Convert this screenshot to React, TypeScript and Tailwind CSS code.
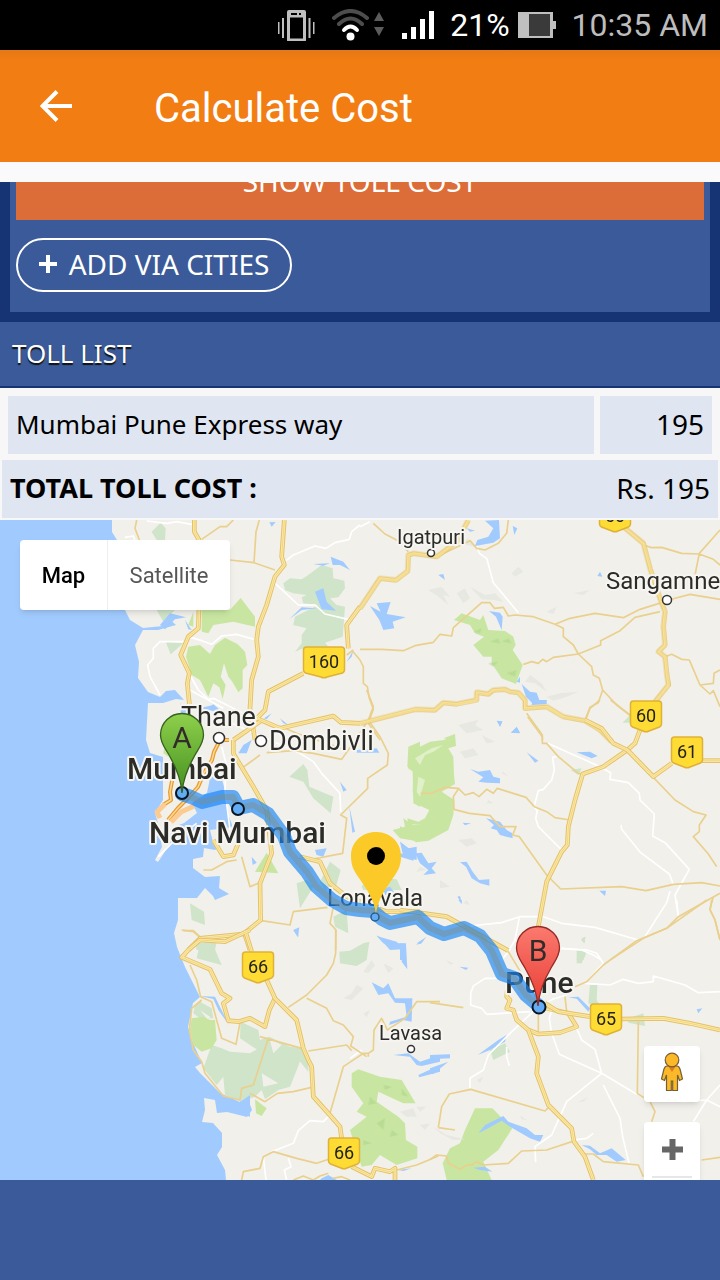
import type { ReactNode } from "react";

const tolls = [{ name: "Mumbai Pune Express way", cost: 195 }];

/* Map sheets are drawn at three times the display size. */
function Sheet({ x, y, children }: { x: number; y: number; children: ReactNode }) {
  return <g transform={`translate(${x} ${y}) scale(0.33333)`}>{children}</g>;
}

function Highway({ d }: { d: string }) {
  return (
    <>
      <path d={d} fill="none" stroke="#e5c167" strokeWidth="14" strokeLinejoin="round" />
      <path d={d} fill="none" stroke="#fbeaa6" strokeWidth="8" strokeLinejoin="round" />
      <path d={d} fill="none" stroke="#ebcc78" strokeWidth="2" strokeLinejoin="round" />
    </>
  );
}

function Road({ d }: { d: string }) {
  return <path d={d} fill="none" stroke="#ead08d" strokeWidth="5" strokeLinejoin="round" />;
}

function Lane({ d }: { d: string }) {
  return <path d={d} fill="none" stroke="#ffffff" strokeWidth="5" strokeLinejoin="round" />;
}

function Shield({ x, y, w = 31, label }: { x: number; y: number; w?: number; label: string }) {
  const h = w / 2;
  return (
    <g transform={`translate(${x} ${y})`}>
      <path
        d={`M${-h + 3} -15H${h - 3}Q${h} -15 ${h} -12V8Q${h} 10 ${h - 2} 11L3 15Q0 16.500 -3 15L${-h + 2} 11Q${-h} 10 ${-h} 8V-12Q${-h} -15 ${-h + 3} -15Z`}
        fill="#fedc34"
        stroke="#dfb136"
        strokeWidth="1.500"
      />
      <text y="6" textAnchor="middle" fontSize="18" fill="#222">
        {label}
      </text>
    </g>
  );
}

function Place({ x, y, size, bold, children }: { x: number; y: number; size: number; bold?: boolean; children: string }) {
  return (
    <text
      x={x}
      y={y}
      fontSize={size}
      fontWeight={bold ? 500 : 400}
      fill="#2b2b28"
      stroke="#f6f5f1"
      strokeWidth="4"
      strokeLinejoin="round"
      paintOrder="stroke"
    >
      {children}
    </text>
  );
}

function Pin({ x, y, label, from, to, edge }: { x: number; y: number; label: string; from: string; to: string; edge: string }) {
  return (
    <g transform={`translate(${x} ${y})`}>
      <defs>
        <linearGradient id={`pin-${label}`} x1="0" y1="0" x2="0" y2="1">
          <stop offset="0" stopColor={from} />
          <stop offset="1" stopColor={to} />
        </linearGradient>
      </defs>
      <path
        d="M0 0C-1 -14 -6 -26 -13 -38C-17 -45 -21.500 -50 -21.500 -58A21.500 21.500 0 0 1 21.500 -58C21.500 -50 17 -45 13 -38C6 -26 1 -14 0 0Z"
        fill={`url(#pin-${label})`}
        stroke={edge}
        strokeWidth="1.300"
      />
      <text y="-45" textAnchor="middle" fontSize="30" fill="#332b2a">
        {label}
      </text>
    </g>
  );
}

const route = "M182 794L191 797L202 802L222 797L233 797L239 808L253 805L268 814L284 836L290 852L307 872L316 886L332 900L346 908L360 910L373 911L382 919L390 923L418 917L430 928L444 934L464 928L480 936L492 951L502 974L514 978L526 995L539 1006";

function TollMap() {
  return (
    <svg
      className="block h-full w-full bg-[#a1cbfe] font-[Roboto,sans-serif]"
      viewBox="0 520 720 660"
      preserveAspectRatio="xMidYMid slice"
      role="img"
      aria-label="Route from Mumbai to Pune"
    >
      <path
        fill="#f1f0eb"
        d="M112 520V532L117 540L122 565V590L125 610L130 620L143 628L163 626L168 618L176 625L158 630L143 630L135 645L139 662L138 678L148 692L160 697L166 691L175 690L184 700L176 699L163 703L148 703L146 740L150 753L163 757V800L155 813L158 823L162 847L155 860L158 862L168 847L172 828L184 823L197 813L192 803L207 793L210 778L220 773L225 790L229 817L233 827L210 830L213 842L220 846L215 850L204 848L203 857L193 859V868L205 877L220 876L219 888L229 894L215 900L213 896L205 888L197 898L178 898V920L174 933L177 947L185 967L200 997L193 1003L188 1027L193 1043L202 1063L195 1067L200 1073L220 1093L240 1102L245 1090L257 1082L247 1096L252 1110L247 1117L227 1112L217 1113L215 1100L204 1098L205 1110L202 1122L213 1123L222 1133V1147L217 1155L225 1170L226 1180H720V520Z"
      />

      {/* Parks */}
      <Sheet x={0} y={510}>
        <path fill="#cfe4c9" d="M455 65L482 38L497 55L495 90H470ZM850 220L870 205L905 208L925 195L965 165L998 175L1000 205L1033 212L1035 235L1015 262L990 265L1010 285L1035 290L1028 380L975 398L985 410H920L885 425L905 400V375L920 355L880 345L885 320L925 300L955 285L910 280L905 262L920 255L880 250L855 240ZM470 300H525L490 335ZM497 395L550 400L512 433Z" />
        <path fill="#c8e6a1" d="M605 300H690L722 264L765 320V350L700 335L640 345L625 370L605 365ZM565 345L580 305V350ZM565 410L600 405L630 432L645 405L675 383L712 402L735 425L742 465L728 480V535L715 547L697 515L685 500L672 460L662 500L677 525L668 567L658 532L640 520L625 560L600 510L575 495L558 440Z" />
      </Sheet>
      <Sheet x={360} y={510}>
        <path fill="#c8e6a1" d="M282 330L305 310L360 330L370 315L385 360L435 363L460 380L467 405L458 420L488 465L468 522L425 505L395 460L395 440L370 440L340 405L372 380L345 370L330 345ZM250 685L285 672L285 690Z" />
      </Sheet>
      <Sheet x={100} y={690}>
        <path fill="#cfe4c9" d="M568 260L610 222L622 240L628 290L700 320L692 370L640 325L610 275ZM660 575L690 515L722 540L705 600H675ZM590 580L620 570L640 590L600 655ZM270 640L312 665L315 705L275 690ZM700 680L740 660L745 730L705 710ZM285 760L350 755L345 780H290ZM785 590L800 560L890 568L905 600H790Z" />
        <path fill="#c8e6a1" d="M500 488L535 550L465 545ZM200 130L220 160L205 200L190 190ZM878 420L915 410L910 385L940 405H960V455L900 445ZM925 170L960 155V350L940 340L938 240L922 230Z" />
      </Sheet>
      <Sheet x={400} y={700}>
        <path fill="#c8e6a1" d="M24 155L60 140L90 125L132 120L165 102L168 138L145 145L160 170L162 225L165 252L125 275L163 300L160 345L145 390L85 422L48 427L0 395V378L30 400L62 375L25 372L22 355L55 365L75 355L88 330L55 315L45 300L38 275L40 215L24 205Z" />
        <path fill="#e0f0c8" d="M45 175L95 145L130 135L100 155L75 165L60 195ZM55 230L75 240L60 290L50 275Z" />
        <path fill="#cfe4c9" d="M668 68L690 45V68ZM512 210L545 205L535 225ZM543 720L555 710V730ZM530 780L540 750L560 755L550 780Z" />
      </Sheet>
      <Sheet x={150} y={930}>
        <path fill="#cfe4c9" d="M140 85L150 40L185 35L215 105ZM272 275L325 300L330 330L358 320L420 350L460 355L475 390L475 425L450 395L420 470L385 480L345 508L335 480L315 500L275 515L225 495L220 440L200 465L160 415L185 345L215 355L240 365L300 370L320 358L270 325ZM568 65L600 62L640 40L658 35L650 90L620 108L570 100Z" />
        <path fill="#cfe4c9" d="M135 225L150 215L185 235L190 265H150L130 250Z" />
        <path fill="#f1f0eb" d="M358 325L395 345L370 370ZM335 430L385 460L340 470ZM450 395L475 430L435 440ZM265 330L320 360L250 365ZM150 240L182 262L172 268Z" />
        <path fill="#c8e6a1" d="M125 265L160 260L180 270H195L200 330L185 355L155 365L130 345L120 300ZM315 508L350 535L335 558L318 550ZM605 430L625 418L690 440L755 450L797 520L760 520L685 485L680 515L745 560L765 580L768 630L802 650V685L740 705L690 675L665 705L635 710L625 680L600 600L650 560L620 545L640 520L605 470Z" />
      </Sheet>
      <Sheet x={430} y={900}>
        <path fill="#c8e6a1" d="M135 625H187L247 685L205 750L160 785L185 840H50L38 790L60 745L90 730L105 690Z" />
        <path fill="#cfe4c9" d="M440 150L470 155L455 190H440ZM455 115L468 110L460 130ZM480 255H502L500 300L515 325L475 310ZM595 355L640 340L645 378L595 368ZM180 450L225 430L240 455L190 480Z" />
      </Sheet>

      {/* Water */}
      <g fill="#a1cbfe">
        <Sheet x={0} y={510}>
          <path d="M480 345L510 310L558 322L525 328L495 358ZM540 580L565 600L568 690H550ZM945 245L970 235L980 275L1008 302L965 298ZM992 140L1030 155L1050 180L1020 165H998ZM868 328L905 292L950 295L905 300ZM940 162L990 160L970 167ZM808 37L827 36L815 50ZM555 330L575 360L565 358ZM1040 455L1060 420L1055 440ZM620 598L640 583L660 600Z" />
        </Sheet>
        <Sheet x={360} y={510}>
          <path d="M375 32L417 30L420 85L400 98L345 108L352 90L385 80L400 55ZM458 48L472 55L463 75ZM320 55L345 62L330 65ZM50 280L92 276L80 312L137 322L98 335L103 355L70 360L58 330L30 288L62 305ZM235 195L250 192L255 210ZM387 303L420 308L428 320L425 360L408 320ZM485 522L510 545L530 548L538 570H560L555 580L520 583L498 560ZM470 515L480 500V518ZM410 632L427 634L420 650ZM453 668L470 650L480 668ZM712 198L720 185L727 200Z" />
        </Sheet>
        <Sheet x={100} y={690}>
          <path d="M298 55L340 45L390 95L350 65ZM492 85L515 70L500 88ZM540 85L565 105L550 100ZM645 480L680 475L670 500L650 495ZM720 275L740 300L730 305ZM748 350L765 425L757 428ZM455 500L470 518L458 525ZM580 720L598 712L593 742ZM830 738L890 755L910 780L850 760ZM840 600L870 590L885 610L855 615ZM900 455L925 475L950 470V510L910 500ZM770 180L830 175L838 188H770ZM430 165L455 150L440 190H415Z" />
        </Sheet>
        <Sheet x={400} y={700}>
          <path d="M292 63L307 65L300 80ZM333 98L350 82L360 100ZM380 157L415 182L405 188ZM530 157L570 155L593 168L575 175ZM210 207L235 215L270 210L280 230L300 235V250L260 248L235 245L250 232ZM258 355L300 365L320 390L337 400L338 415L300 405L290 390L272 385L282 375ZM188 368L213 370L195 376ZM0 425L45 460L40 482L0 470V460L25 465ZM45 460L65 458L85 490L110 485L95 505L108 520L70 525L85 510L60 490ZM180 487L200 485L218 515L237 540L268 538V557L240 550L215 535L198 500ZM172 590L180 588L187 612ZM598 572L618 572L615 588ZM48 735L75 715L65 730ZM0 730H18V780H0ZM398 0H440V12L395 15Z" />
        </Sheet>
        <Sheet x={150} y={930}>
          <path d="M150 198L195 200L212 235L237 285L205 240L190 207ZM265 520L300 495V560L270 550ZM680 15L710 35L768 42L772 118L755 95L758 58L720 60ZM800 40L830 20L810 42ZM665 157L700 175L715 160L735 205L787 205L785 275L760 270L718 285L720 275L770 260L765 220L735 218L715 190L685 195ZM730 375L775 370L810 395L870 375V395L815 408L800 405L780 380ZM805 435L870 405V425L808 442ZM430 0H445V20ZM745 720L785 715L760 723ZM515 745L535 735L560 750H510Z" />
        </Sheet>
        <Sheet x={430} y={900}>
          <path d="M143 465L205 420L230 405L225 425L180 450ZM0 465L60 463V475L0 478ZM0 505L55 485L10 522H0ZM145 700L165 675L220 648L235 665L290 685L315 705H340L330 725L300 715L240 680L215 662L165 690ZM455 735L480 737L510 760L545 745L587 780L560 785L530 765L500 765L480 748ZM88 200L115 203L108 210ZM415 292L445 290L480 325L475 335L440 296ZM800 328L817 325L805 340ZM130 803L165 800L187 815L150 810ZM85 0H95V12Z" />
        </Sheet>
      </g>

      {/* Hill shading */}
      <g fill="#e8e8e2">
        <Sheet x={360} y={510}>
          <path d="M205 240L245 230L270 260L250 255L265 285L235 260ZM290 250L315 235L330 265L310 280ZM330 230L375 255L405 250L430 275L400 270L365 268ZM455 190L475 170L490 185L465 200ZM510 495L545 520L560 545L525 520L495 515ZM560 560L600 550L655 545L620 560L580 572ZM215 60L250 65L235 80ZM300 100L325 85L340 110ZM560 305L590 290L580 312ZM640 250L690 240L670 255Z" />
        </Sheet>
        <Sheet x={400} y={700}>
          <path d="M175 75L235 60L225 75L250 90L200 100ZM245 105L285 125L260 130ZM180 155L220 145L235 165L195 175ZM310 215L325 230L305 220ZM175 420L215 415L230 430L200 440ZM60 500L80 510L50 515ZM120 540L150 560L120 565ZM265 300L280 310L260 310ZM200 600L210 615L190 610Z" />
        </Sheet>
        <Sheet x={150} y={930}>
          <path d="M580 205L605 190L620 165L640 175L605 210ZM640 125L665 90L675 105L655 130ZM750 545L790 535L800 560L770 560ZM700 100L730 115L715 130ZM640 250L660 240L650 262ZM800 530L830 530L810 545ZM810 585L840 580L825 600Z" />
        </Sheet>
        <Sheet x={430} y={900}>
          <path d="M10 680L50 705L105 718L70 720L30 700ZM445 605L475 590L460 605ZM270 645L290 660L275 658ZM140 540L160 530L150 550ZM50 180L70 190L60 195Z" />
        </Sheet>
      </g>
      <g fill="#afd58d" opacity="0.6">
        <Sheet x={360} y={510}>
          <path d="M390 395L415 385L420 400ZM425 395L445 385L455 400ZM340 365L365 355L360 370ZM440 490L470 480L465 500ZM385 460L415 455L400 470Z" />
        </Sheet>
        <Sheet x={150} y={930}>
          <path d="M680 580L705 565L700 600ZM725 600L745 615L720 620ZM660 500L680 520L655 525ZM700 465L725 470L705 480ZM640 630L665 640L640 645ZM755 475L775 500L755 495Z" />
        </Sheet>
      </g>

      {/* White lanes */}
      <Sheet x={0} y={510}>
        <Lane d="M440 33L500 40L530 35L585 45M375 82L400 78L405 92M858 152L880 135L945 108L978 115L1005 98L1048 88L1055 65L1080 45M820 215L895 285L945 285L975 312L1045 328M770 390L710 373L665 378L635 403L605 392L565 380M560 395H480L460 415V445L443 465L450 500L480 555M568 492L595 540L625 568L640 565L740 615" />
      </Sheet>
      <Sheet x={360} y={510}>
        <Lane d="M350 108L358 130L380 145L400 218L475 308M0 50L30 35" />
      </Sheet>
      <Sheet x={100} y={690}>
        <Lane d="M395 100L600 190L640 215L665 250L720 310L722 365M260 -5L370 55M365 170L378 220L375 300L390 420M175 500L235 440L290 400" />
      </Sheet>
      <Sheet x={400} y={700}>
        <Lane d="M443 130L600 200L632 218L630 238L685 248L718 280L720 300L763 342L758 408L795 428L868 508L825 585L835 648M470 170L458 172L463 210L455 240L430 268L415 272L402 320L412 332L407 355L415 380L485 450M663 375L665 388L722 458L808 522L820 553M810 573L800 608L735 710M210 678L305 668L360 650L430 650L485 670L585 682L715 720M358 652L345 720L325 755L305 780M480 745L545 750L580 765L605 780" />
      </Sheet>
      <Sheet x={430} y={900}>
        <Lane d="M395 145L470 150L500 160L520 190L465 250L540 255L580 238L625 250L670 245V228L765 255L805 278L870 275M325 320L240 400L175 465L160 510L120 535V565M230 440V470L238 497M200 235L165 235L130 258L122 280V315L155 325L170 343L300 335M365 330L358 355L365 400L388 463L515 520L620 583M440 385L455 420L495 448L515 520L410 605L365 705L315 740L317 787M520 555L570 655L578 710L597 790M790 665L830 600L870 555M755 605L830 600L870 620M430 720L470 715L490 700M740 0L745 48M325 320L370 297L410 285" />
      </Sheet>
      <Sheet x={150} y={930}>
        <Lane d="M540 555L520 575L480 572L445 602L430 640L365 665M340 680L348 750M600 385L635 360M415 685L423 710L403 720L410 750" />
      </Sheet>

      {/* Secondary roads */}
      <Sheet x={0} y={510}>
        <Road d="M410 30L405 55L418 90M605 88L660 50H680L700 30M690 150L762 158L825 180M762 158L768 65L778 30M1055 420L1080 450M1060 420L1040 435" />
      </Sheet>
      <Sheet x={360} y={510}>
        <Road d="M40 40L75 72L110 90L145 125M230 140L330 92L350 115L375 120L415 100L440 70L445 30M0 418L65 418L130 422L165 407L220 397L240 373L275 378L280 353L365 278H390L403 295L430 292L445 318L465 315L520 320L585 343L610 355V380L640 405L655 432L695 470L700 495L718 505L728 540L770 585L815 620M728 540L715 578L690 592L675 630M585 343L630 325L705 310L790 323L840 298L905 278M900 305L825 322L780 362L722 392V405L655 432L580 442L560 455L548 448L535 460L515 455L490 463M850 105L875 113L905 112L965 130L1017 132L1060 148L1080 165M1080 60L1018 130L1005 195M925 270L990 253L1080 268M0 450L10 470V520L22 530L28 565L40 598L25 640L60 690M915 440L935 433L965 448L988 450L1000 478L1020 525L1060 520L1062 490L1080 480M1020 525L1050 552L1060 542L1080 590M500 610L547 675V690" />
      </Sheet>
      <Sheet x={100} y={690}>
        <Road d="M800 0L820 50L805 90L840 140L865 190L862 225L803 265V295L722 375L740 385L728 490L625 510M805 90L770 145L725 208L640 190L580 182L500 188M425 235L480 195M425 500L450 590L485 575M485 692L570 705L580 665L700 650M250 722H280L305 745M700 650L690 700L708 720L707 780M310 540H335L380 515L410 510M545 110L590 130L740 180" />
      </Sheet>
      <Sheet x={400} y={700}>
        <Road d="M383 50L427 110V130H440L475 170L535 220L550 222M62 280H95L135 262L175 265L195 285L220 278L237 290L260 268L280 280L292 265L378 292L403 320L440 335L465 353L510 360M175 267L160 290L162 328L208 340L270 347L300 380L348 380L338 405L358 410L440 525L482 567L665 560L738 572L820 553L905 548L960 558M557 60L570 25L600 0M632 0L690 45M760 232L825 300L880 335L918 345L898 375V395L880 410L925 462L950 500M630 780L730 715L800 685L835 650L960 580M940 590L930 628L945 660L960 720" />
      </Sheet>
      <Sheet x={150} y={930}>
        <Road d="M557 0V70L550 100L530 135L470 195L415 232M470 205L530 235L550 272L580 285L610 320L602 348L650 380M475 363L590 345L605 362M95 0L130 5L150 22M120 105L140 150L152 200L185 215L215 325L258 343L270 278M155 210L125 235L118 300L130 360L155 395L165 430L220 498L270 510L275 475L310 465L355 325M330 320L455 355M300 490L345 515L382 490L430 485L485 472M540 550L580 410L640 370L655 370V380M655 370L670 360L672 300L695 265L712 300L765 265L800 215H870M275 750L280 725L330 715L340 680L370 665L440 685L500 700L545 685M548 745L575 740L600 750M740 720L800 705L865 678M430 750L460 738L490 750L510 738L535 730" />
      </Sheet>
      <Sheet x={430} y={900}>
        <Road d="M180 130L235 155L325 305V400M435 260L470 245L520 195L620 122L710 85L830 0M845 0L840 30L855 60L870 120M0 308L100 323M330 320L410 335L405 290M370 400L440 380M25 683L35 620L58 582L122 568L345 633L358 620M25 683L75 690M0 778L20 765L50 768L55 790L90 808L110 795H125L140 785L160 795L235 790L275 753L350 750L435 722M460 762H490L520 785L625 795L640 830M815 780L870 772M625 365L622 580L660 605L675 635L665 665" />
      </Sheet>

      {/* Highways */}
      <Sheet x={0} y={510}>
        <Highway d="M583 30V65L597 90V290L595 355L565 380L542 435L568 490L562 520L570 600" />
        <Highway d="M853 30L845 140L853 165L825 200L800 285L775 350L770 390L775 440L755 510L750 595L765 690" />
        <Highway d="M910 490L805 545L795 600L770 625L840 655L1000 618L1022 637L1080 640" />
        <Highway d="M1045 415L1040 345L1080 290" />
      </Sheet>
      <Sheet x={360} y={510}>
        <Highway d="M325 30L290 95L230 140L160 130L145 135L143 183L108 210L60 205L0 295" />
        <Highway d="M790 50L850 100L870 175L900 265L915 305L910 350L915 405L895 425L915 440L920 490L925 525L885 575" />
        <Highway d="M0 640L165 598L225 600L250 578L290 582L350 570V547L385 552L400 540L435 538L450 545L475 548L495 570V595L560 590L610 620L675 632L720 660L755 695" />
      </Sheet>
      <Sheet x={100} y={690}>
        <Highway d="M400 150V190L460 290L500 360L515 490L480 580L482 690L430 732L300 745L265 780" />
        <Highway d="M435 735L450 780" />
        <Highway d="M600 500L660 515L690 580L740 620L860 665H960" />
        <Highway d="M340 450L370 500L400 495L415 460" />
        <Highway d="M480 95L400 150" />
      </Sheet>
      <Sheet x={400} y={700}>
        <Highway d="M720 90L705 130L682 150L610 200L548 222L525 300L505 380L502 435L485 455L440 545L415 680" />
        <Highway d="M555 60L605 85L640 130L682 150L760 230L815 190" />
        <Highway d="M905 182H960" />
        <Highway d="M0 630L140 650L325 752" />
      </Sheet>
      <Sheet x={150} y={930}>
        <Highway d="M115 60L150 30L225 35L300 0M115 60L95 82L180 118L215 190L240 205L220 220L235 272L265 275L300 265L345 290L358 240L375 205" />
        <Highway d="M288 10L305 65M350 150L375 205L440 270L460 355L475 390L485 410L490 500L535 550L570 590L575 625" />
        <Highway d="M605 710L665 740L675 715L720 725L735 715V750" />
      </Sheet>
      <Sheet x={430} y={900}>
        <Highway d="M232 270L230 290L240 300L230 325L250 330L260 360L295 390L325 402L390 398L440 380L415 340L350 325" />
        <Highway d="M295 390L325 470L320 520L355 615L425 685L432 725L465 770L490 840" />
        <Highway d="M345 310L385 335L480 350M575 357L700 355L780 370L870 390" />
      </Sheet>

      {/* City roads around Mumbai */}
      <g fill="none" stroke="#e89b2d" strokeLinejoin="round">
        <path strokeWidth="4" d="M229 740H220L214 752L212 760L204 773L198 787L188 798L178 808L168 820M174 770L170 792L171 800L163 805" />
        <path stroke="#fdda9b" strokeWidth="1.500" d="M229 740H220L214 752L212 760L204 773L198 787L188 798L178 808L168 820M174 770L170 792L171 800L163 805" />
        <path stroke="#fbcb92" strokeWidth="5" d="M165 804L157 812L160 818M171 822L181 812L194 806" />
      </g>

      {/* Place names */}
      <g fill="#fff" stroke="#333" strokeWidth="1.500">
        <circle cx="431" cy="553" r="3.500" />
        <circle cx="667" cy="600" r="4.500" />
        <circle cx="219" cy="738" r="5.500" />
        <circle cx="261" cy="741" r="5.500" />
        <circle cx="411" cy="1049" r="3.500" />
      </g>
      <Place x={397} y={544} size={20}>Igatpuri</Place>
      <Place x={606} y={589} size={24}>Sangamner</Place>
      <Place x={181} y={726} size={27}>Thane</Place>
      <Place x={269} y={750} size={27}>Dombivli</Place>
      <Place x={127} y={779} size={30} bold>Mumbai</Place>
      <Place x={149} y={843} size={30} bold>Navi Mumbai</Place>
      <Place x={327} y={906} size={24}>Lonavala</Place>
      <Place x={505} y={993} size={30} bold>Pune</Place>
      <Place x={379} y={1040} size={20}>Lavasa</Place>

      <Shield x={615} y={516} label="60" />
      <Shield x={324} y={662} w={41} label="160" />
      <Shield x={646} y={716} label="60" />
      <Shield x={687} y={752} label="61" />
      <Shield x={258} y={967} label="66" />
      <Shield x={606} y={1019} label="65" />
      <Shield x={344} y={1153} label="66" />

      {/* Route */}
      <path d={route} fill="none" stroke="#1482f5" strokeOpacity="0.65" strokeWidth="14" strokeLinejoin="round" strokeLinecap="round" />
      <path d={route} fill="none" stroke="#848a78" strokeOpacity="0.4" strokeWidth="6" strokeLinejoin="round" />
      <g fill="#62acf5" stroke="#071626" strokeWidth="2">
        <circle cx="182" cy="793" r="6" />
        <circle cx="238" cy="809" r="6" />
        <circle cx="539" cy="1007" r="6.500" />
        <circle cx="375" cy="917" r="4" stroke="#285c8c" strokeWidth="1.500" />
      </g>
      <path d="M376 914C374 898 365 887 359 878C354 871 351 866 351 856C351 842 362 832 376 832C390 832 401 842 401 856C401 866 398 871 393 878C387 887 378 898 376 914Z" fill="#fbca28" />
      <circle cx="376" cy="856" r="9" fill="#000" />
      <Pin x={182} y={793} label="A" from="#8fd04c" to="#43901f" edge="#35621f" />
      <Pin x={538} y={1006} label="B" from="#fb7a6e" to="#e93d35" edge="#962923" />
    </svg>
  );
}

function StatusBar() {
  return (
    <div className="flex h-[50px] items-center justify-end bg-black pr-3 font-[Roboto,sans-serif] text-[32px] leading-[50px] text-[#bdbdbd]">
      <svg className="mr-4 h-8 w-[38px]" viewBox="0 0 38 32" fill="#bfbfbf" aria-label="Vibrate">
        <path fillRule="evenodd" d="M11 1H26Q28 1 28 3V31Q28 33 26 33H11Q9 33 9 31V3Q9 1 11 1ZM12 8.500V29.500H25V8.500ZM13 4V6H19V4ZM21 4V6H23V4Z" />
        <path d="M0 13H1.500V25H0ZM4 9H6V29H4ZM30.500 9H32.500V29H30.500ZM35 13H36.500V25H35Z" />
      </svg>
      <svg className="mr-4 h-8 w-[54px]" viewBox="0 0 54 32" fill="none" strokeWidth="4" strokeLinecap="round" aria-label="Wi-Fi">
        <path stroke="#4d4d4d" d="M2 9Q18.500 -5 35 9M7 15Q18.500 4 30 15" />
        <path stroke="#fff" d="M12 21Q18.500 14 25 21" />
        <circle cx="18.500" cy="27.500" r="4" fill="#fff" />
        <path fill="#5c5c5c" d="M47 3L52 12H42ZM47 27L42 18H52Z" />
      </svg>
      <svg className="mr-4 h-7 w-8" viewBox="0 0 32 28" fill="#fff" aria-label="Signal">
        <path d="M0 22H5V28H0ZM9 16H14V28H9ZM18 8H23V28H18ZM27 0H32V28H27Z" />
      </svg>
      <span className="mr-2 text-white">21%</span>
      <svg className="mr-4 h-[26px] w-[38px]" viewBox="0 0 38 26" fill="#bfbfbf" aria-label="Battery">
        <path d="M0 0H35V9H38V17H35V26H0Z" />
        <path fill="#3a3a3a" d="M11 2H32V24H11Z" />
      </svg>
      <span>10:35 AM</span>
    </div>
  );
}

export default function App() {
  return (
    <div className="flex min-h-screen flex-col bg-[#3b5a99] font-['Noto_Sans',sans-serif] text-[26px] text-black">
      <StatusBar />
      <header className="flex h-28 items-center bg-linear-to-b from-[#e57916] to-[#f27d13] to-10% text-white">
        <button type="button" aria-label="Back" className="ml-10 flex h-12 w-8 items-center">
          <svg className="h-8 w-8" viewBox="0 0 32 32" fill="none" stroke="#fff" strokeWidth="4">
            <path d="M17 1.500L2.500 16L17 30.500M2.500 16H32" />
          </svg>
        </button>
        <h1 className="ml-[82px] pt-[6px] font-[Roboto,sans-serif] text-[40px] leading-[48px]">Calculate Cost</h1>
      </header>
      <main className="border-t-[20px] border-[#fafafa]">
        <section className="overflow-hidden border-x-[10px] border-b-[10px] border-[#163474] bg-[#3b5a99] px-[6px] pb-5 text-white">
          <button type="button" className="-mt-9 block h-[74px] w-full bg-[#dd6d38] pb-1 text-[28px]">
            SHOW TOLL COST
          </button>
          <button type="button" className="mt-[18px] flex h-[54px] w-[276px] items-center justify-center rounded-full border-2 border-white pb-[2px] text-[28px]">
            <svg className="mr-3 h-[18px] w-[18px]" viewBox="0 0 18 18" fill="none" stroke="#fff" strokeWidth="4" aria-hidden="true">
              <path d="M9 0V18M0 9H18" />
            </svg>
            ADD VIA CITIES
          </button>
        </section>
        <h2 className="h-[66px] border-b-2 border-[#163474] pl-3 leading-[62px] text-white [text-shadow:0_2px_1px_#111]">TOLL LIST</h2>
        <div className="bg-[#f7f7f7] p-[2px]">
          <table className="w-full border-separate border-spacing-[6px]">
            <tbody>
              {tolls.map((toll) => (
                <tr key={toll.name} className="h-[58px] bg-[#dfe6f1]">
                  <td className="px-2 pb-[2px]">{toll.name}</td>
                  <td className="w-28 px-2 pb-[2px] text-right text-[28px]">{toll.cost}</td>
                </tr>
              ))}
            </tbody>
          </table>
          <div className="flex h-[58px] items-center justify-between bg-[#dfe6f1] px-2 pb-[2px] text-[28px]">
            <strong className="text-[27px]">TOTAL TOLL COST :</strong>
            <span>Rs. 195</span>
          </div>
        </div>
        <div className="relative h-[660px] overflow-hidden">
          <TollMap />
          <div className="absolute top-5 left-5 flex h-[70px] overflow-hidden rounded bg-white font-[Roboto,sans-serif] text-[22px] shadow-md">
            <button type="button" className="w-[88px] border-r border-[#eee] font-medium">
              Map
            </button>
            <button type="button" className="w-[122px] text-[#565656]">
              Satellite
            </button>
          </div>
          <button type="button" aria-label="Street View" className="absolute right-5 bottom-[78px] flex h-14 w-14 items-center justify-center rounded bg-white pb-1 shadow-md">
            <svg className="h-10 w-6" viewBox="0 0 24 40" fill="#fbb829" stroke="#755f35" strokeWidth="1.200">
              <path d="M7 14H17Q19 14 20 17L22.500 27L19.500 28.500L17.500 23V38.500H12.700V29H11.300V38.500H6.500V23L4.500 28.500L1.500 27L4 17Q5 14 7 14Z" />
              <path stroke="none" fill="#e47a1d" d="M8 14H16L12 20Z" />
              <circle cx="12" cy="8" r="6.800" />
            </svg>
          </button>
          <button type="button" aria-label="Zoom in" className="absolute right-5 -bottom-2 flex h-[66px] w-14 justify-center rounded-t bg-white pt-[17px] shadow-md">
            <svg className="h-[21px] w-[21px]" viewBox="0 0 21 21" fill="none" stroke="#666" strokeWidth="6" aria-hidden="true">
              <path d="M10.500 0V21M0 10.500H21" />
            </svg>
            <span className="absolute inset-x-2 bottom-[10px] h-[2px] bg-[#e6e6e6]" />
          </button>
        </div>
      </main>
    </div>
  );
}
